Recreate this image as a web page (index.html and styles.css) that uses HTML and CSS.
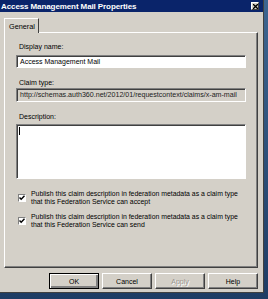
FILE: index.html
```html
<!DOCTYPE html>
<html lang="en">
<head>
  <meta charset="UTF-8" />
  <title>Access Management Mail Properties</title>
  <link rel="stylesheet" href="styles.css">
</head>
<body>

  <div class="window">
    <div class="titlebar">
      <span class="title">Access Management Mail Properties</span>
      <span class="close">
        <svg width="5" height="5" viewBox="0 0 5 5"><path d="M0 0L5 5M5 0L0 5" stroke="#000" stroke-width="1.3"/></svg>
      </span>
    </div>

    <div class="content">
      <div class="tabs">
        <div class="tab">General</div>
      </div>

      <div class="panel">
        <label>Display name:</label>
        <div class="field name">Access Management Mail</div>

        <label class="gap">Claim type:</label>
        <div class="field readonly">http://schemas.auth360.net/2012/01/requestcontext/claims/x-am-mail</div>

        <label class="gap">Description:</label>
        <div class="field area"><span class="caret"></span></div>

        <div class="check-row first">
          <span class="checkbox">
            <svg width="6" height="6" viewBox="0 0 6 6"><path d="M0.5 2.5L2.2 4.3L5.5 0.8" fill="none" stroke="#000" stroke-width="1.4"/></svg>
          </span>
          <span class="check-text">Publish this claim description in federation metadata as a claim type<br>that this Federation Service can accept</span>
        </div>

        <div class="check-row">
          <span class="checkbox">
            <svg width="6" height="6" viewBox="0 0 6 6"><path d="M0.5 2.5L2.2 4.3L5.5 0.8" fill="none" stroke="#000" stroke-width="1.4"/></svg>
          </span>
          <span class="check-text">Publish this claim description in federation metadata as a claim type<br>that this Federation Service can send</span>
        </div>
      </div>

      <div class="buttons">
        <button class="default">OK</button>
        <button>Cancel</button>
        <button class="disabled">Apply</button>
        <button>Help</button>
      </div>
    </div>
  </div>

</body>
</html>
```

FILE: styles.css
```css
body {
  margin: 0;
  width: 268px;
  height: 299px;
  overflow: hidden;
  background: linear-gradient(#3d6590, #1e3c64);
  font-family: "Liberation Sans", Arial, sans-serif;
  font-size: 7px;
  color: #000;
}
.window {
  width: 264px;
  height: 293px;
  box-sizing: border-box;
  background: #d4d0c8;
  border-right: 1px solid #404040;
  border-bottom: 1px solid #404040;
}
.titlebar {
  height: 12px;
  background: #0a246a;
  display: flex;
  align-items: center;
  justify-content: space-between;
  padding: 0 4px 0 1px;
}
.title {
  color: #fff;
  font-weight: bold;
  font-size: 8px;
  letter-spacing: -0.1px;
}
.close {
  width: 8px;
  height: 8px;
  box-sizing: border-box;
  background: #d4d0c8;
  border: 1px solid;
  border-color: #fff #404040 #404040 #fff;
  display: flex;
  align-items: center;
  justify-content: center;
}
.close svg {
  display: block;
}
.content {
  padding: 6px 0 0 4px;
}
.tabs {
  display: flex;
}
.tab {
  width: 35px;
  height: 15px;
  box-sizing: border-box;
  border: 1px solid;
  border-color: #fff #404040 transparent #fff;
  border-bottom: none;
  padding: 3px 0 0 4px;
  line-height: 9px;
  font-size: 7.3px;
  margin-bottom: -1px;
  position: relative;
  background: #d4d0c8;
  z-index: 1;
}
.panel {
  width: 254px;
  height: 236px;
  box-sizing: border-box;
  border: 1px solid;
  border-color: #fff #404040 #404040 #fff;
  box-shadow: inset -1px -1px 0 #808080;
  padding: 9px 0 0 11px;
  display: flex;
  flex-direction: column;
}
label {
  display: block;
  line-height: 9px;
  height: 9px;
  margin-left: 3px;
}
label.gap {
  margin-top: 10px;
}
.field {
  width: 230px;
  box-sizing: border-box;
  margin-top: 4px;
  background: #fff;
  border: 1px solid;
  border-color: #808080 #fff #fff #808080;
  box-shadow: inset 1px 1px 0 #404040;
  padding: 0 0 0 3px;
  white-space: nowrap;
  overflow: hidden;
}
.field.name {
  height: 13px;
  line-height: 11px;
}
.field.readonly {
  height: 14px;
  line-height: 12px;
  margin-top: 1px;
  background: #d4d0c8;
  color: #222;
  font-size: 7.1px;
}
.field.area {
  height: 55px;
  margin-top: 3px;
  padding: 2px 0 0 2px;
}
.caret {
  display: block;
  width: 1px;
  height: 8px;
  background: #000;
}
.check-row {
  display: flex;
  align-items: center;
  margin-top: 7px;
}
.check-row.first {
  margin-top: 11px;
}
.checkbox {
  width: 8px;
  height: 8px;
  box-sizing: border-box;
  margin: 0 5px 0 2px;
  background: #fff;
  border: 1px solid;
  border-color: #808080 #fff #fff #808080;
  display: flex;
  align-items: center;
  justify-content: center;
}
.check-text {
  line-height: 8px;
  font-size: 6.9px;
}
.buttons {
  display: flex;
  justify-content: flex-end;
  gap: 3px;
  width: 254px;
  margin-top: 5px;
}
button {
  width: 50px;
  height: 16px;
  padding: 0;
  box-sizing: border-box;
  font-family: "Liberation Sans", Arial, sans-serif;
  font-size: 7px;
  color: #000;
  background: #d4d0c8;
  border: 1px solid;
  border-color: #fff #404040 #404040 #fff;
  box-shadow: inset -1px -1px 0 #808080;
}
button.default {
  border: 1px solid #000;
  box-shadow: inset 1px 1px 0 #fff, inset -2px -2px 0 #808080;
}
button.disabled {
  color: #9a968e;
  text-shadow: 1px 1px 0 #fff;
}
```
